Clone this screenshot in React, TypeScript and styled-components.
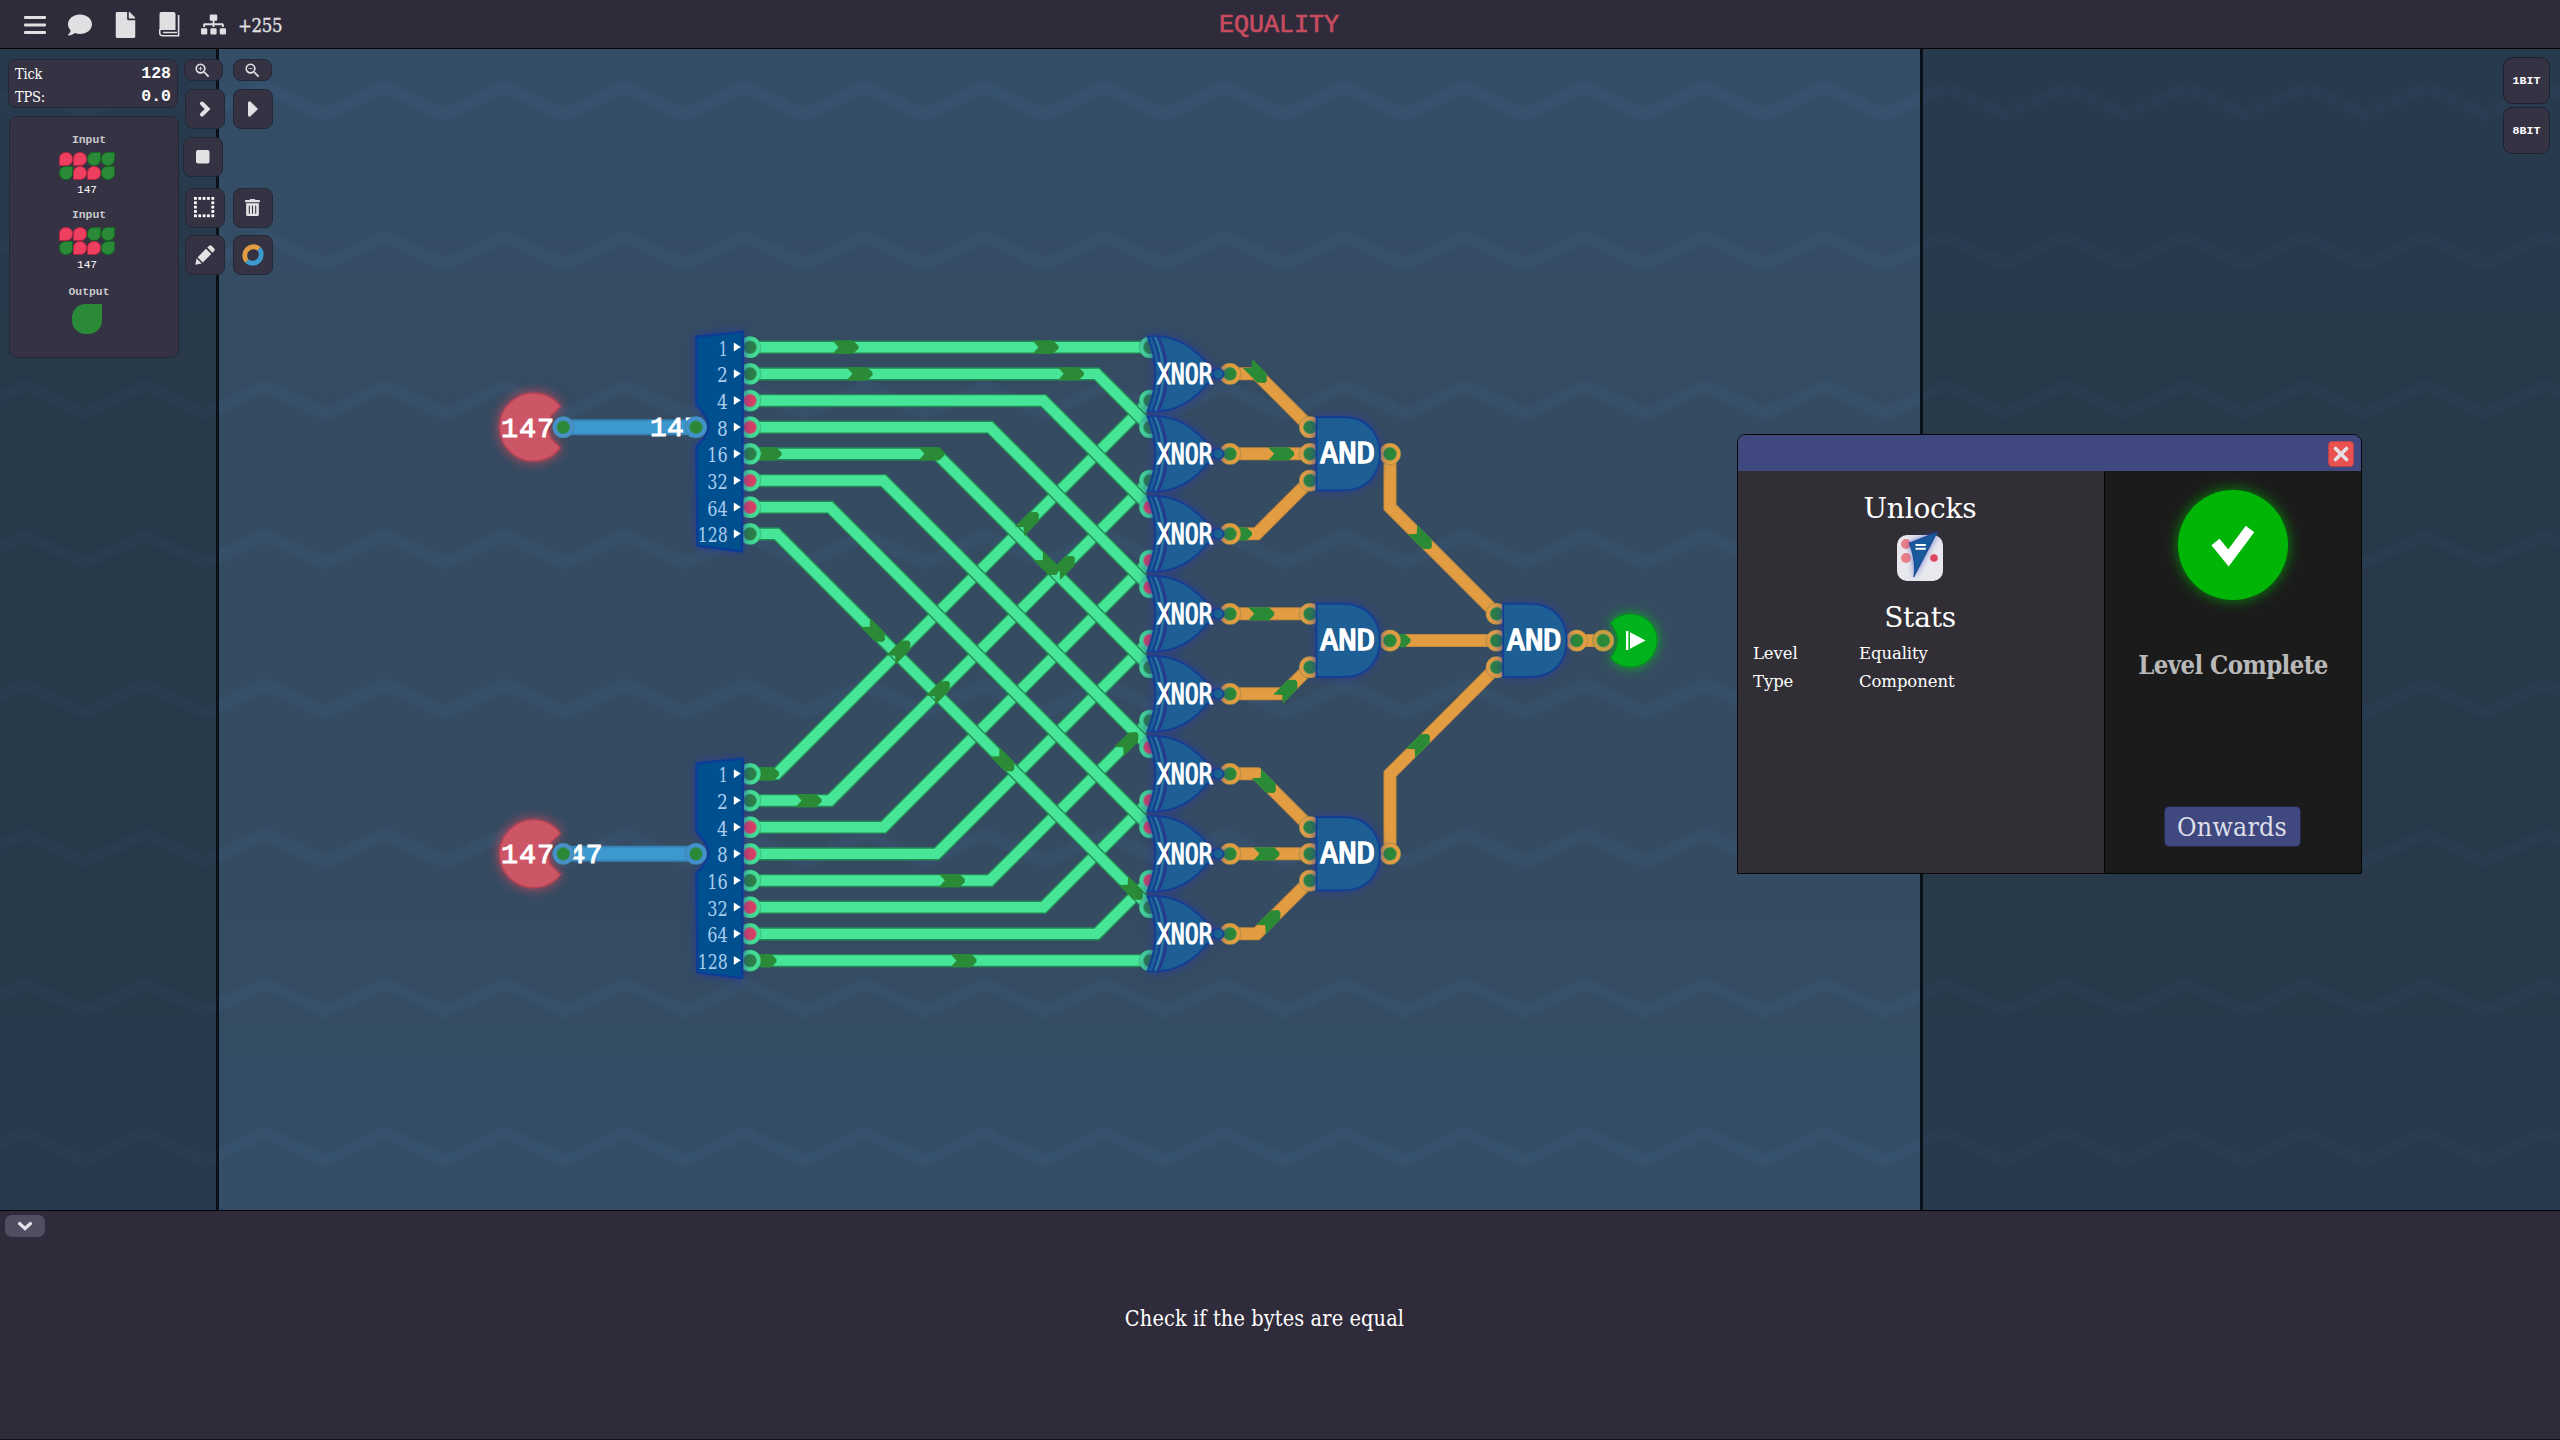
import React from 'react';
import styled, { createGlobalStyle } from 'styled-components';
import { FaComment, FaFile, FaSitemap, FaTrashAlt } from 'react-icons/fa';
import { MdZoomIn, MdZoomOut } from 'react-icons/md';

const SLAB = "'DejaVu Serif Condensed', 'DejaVu Serif', serif";
const SLAB_WIDE = "'DejaVu Serif', serif";
const MONO = "'Liberation Mono', 'DejaVu Sans Mono', monospace";

const GlobalStyle = createGlobalStyle`
  * { box-sizing: border-box; }
  body { margin: 0; background: #2f2b3b; overflow: hidden; }
`;

const Screen = styled.div`
  width: 2560px;
  height: 1440px;
  display: flex;
  flex-direction: column;
  font-family: ${SLAB};
  font-stretch: condensed;
  color: #fff;
`;

const Header = styled.header`
  height: 49px;
  flex: none;
  display: grid;
  grid-template-columns: 1fr auto 1fr;
  align-items: center;
  background: #2f2b3b;
  border-bottom: 1px solid #050507;
`;

const HeaderTools = styled.nav`
  display: flex;
  align-items: center;
  height: 48px;
  padding-left: 24px;
  color: #e0e0e2;
`;

const Tool = styled.span<{ $gap: number }>`
  display: flex;
  padding-top: 1px;
  margin-right: ${p => p.$gap}px;
`;

const FileGlyph = styled(FaFile)`
  width: 23px;
  height: 26px;
`;

const Score = styled.span`
  font-size: 18.5px;
  letter-spacing: -0.35px;
  line-height: 24px;
  padding-top: 4px;
  -webkit-text-stroke: 0.3px currentColor;
`;

const Title = styled.h1`
  margin: 3px 2px 0 0;
  font: 400 25px/30px ${MONO};
  color: #c84c60;
  -webkit-text-stroke: 0.7px currentColor;
`;

const Board = styled.main`
  position: relative;
  height: 1161px;
  flex: none;
  overflow: hidden;
  display: flex;
  justify-content: space-between;
`;

const Canvas = styled.svg`
  position: absolute;
  left: 0;
  top: 0;
`;

const Glow = styled.g<{ $color: string; $size: number }>`
  filter: drop-shadow(0 0 ${p => p.$size}px ${p => p.$color});
`;

const Sidebar = styled.aside`
  position: relative;
  display: flex;
  gap: 5px;
  padding: 10px 0 0 8px;
  align-items: flex-start;
`;

const Panels = styled.div`
  display: flex;
  flex-direction: column;
  width: 172px;
  gap: 8px;
`;

const Panel = styled.section`
  background: #353243;
  border: 1px solid #222936;
  border-radius: 8px;
`;

const TickPanel = styled(Panel)`
  width: 170px;
  height: 49px;
  padding: 2px 6px 0 6px;
`;

const TickRow = styled.div`
  display: flex;
  justify-content: space-between;
  height: 23px;
  align-items: center;
  font-size: 14.5px;
  letter-spacing: -0.2px;
`;

const TickValue = styled.span`
  font: 700 16.5px/20px ${MONO};
  letter-spacing: 0;
`;

const PinPanel = styled(Panel)`
  width: 170px;
  height: 242px;
  margin-left: 1px;
  padding: 16px 14px 0 0;
  display: flex;
  flex-direction: column;
  align-items: center;
`;

const PinGroup = styled.div<{ $height: number }>`
  height: ${p => p.$height}px;
  display: flex;
  flex-direction: column;
  align-items: center;
`;

const PinLabel = styled.div`
  font: 700 11.4px/15px ${MONO};
  color: #c9c9cd;
  margin: 0 0 4px 4px;
`;

const PinValue = styled.div`
  font: 400 11.2px/14px ${MONO};
  color: #fff;
  margin-top: 3px;
`;

const Bits = styled.div`
  display: grid;
  grid-template-columns: repeat(4, 14.2px);
  grid-auto-rows: 14.2px;
`;

const Bit = styled.i<{ $on: boolean; $size?: number }>`
  width: ${p => p.$size ?? 14.2}px;
  height: ${p => p.$size ?? 14.2}px;
  background: ${p => (p.$on ? '#2b8a38' : '#ee3f60')};
  border: ${p => (p.$size ? 0 : 1.5)}px solid ${p => (p.$on ? '#12691f' : '#b32440')};
  border-radius: ${p => (p.$on ? '45% 1px 45% 45%' : '45% 45% 45% 1px')};
`;

const ToolColumns = styled.div`
  display: grid;
  grid-template-columns: 40px 40px;
  grid-template-rows: 21.5px 40px 40px 40px 40px;
  column-gap: 8px;
  row-gap: 8px;
`;

const ToolButton = styled.button<{ $dx?: number; $dy?: number; $w?: number; $h?: number }>`
  width: ${p => p.$w ?? 40}px;
  height: ${p => p.$h ?? 40}px;
  margin: ${p => p.$dy ?? 0}px 0 0 ${p => p.$dx ?? 0}px;
  padding: 0 1px 0 0;
  display: flex;
  align-items: center;
  justify-content: center;
  background: #353243;
  border: 1px solid #222936;
  border-radius: 8px;
  color: #e2e2e4;
`;

const Spacer = styled.span``;

const Palette = styled.aside`
  position: relative;
  display: flex;
  flex-direction: column;
  gap: 3px;
  padding: 8px 10px 0 0;
`;

const PaletteButton = styled.button`
  width: 47px;
  height: 47px;
  padding: 0;
  background: #353243;
  border: 1px solid #1d2230;
  border-radius: 9px;
  color: #fff;
  font: 700 11.6px/14px ${MONO};
`;

const Dialog = styled.section`
  position: absolute;
  left: 1737px;
  top: 385px;
  width: 625px;
  height: 440px;
  display: flex;
  flex-direction: column;
  border: 1px solid #07070a;
  border-radius: 9px 9px 0 0;
  overflow: hidden;
`;

const DialogBar = styled.header`
  height: 36px;
  flex: none;
  display: flex;
  justify-content: flex-end;
  align-items: center;
  padding: 2px 7px 0 0;
  background: #404880;
`;

const CloseButton = styled.button`
  width: 26px;
  height: 26px;
  padding: 0;
  display: flex;
  align-items: center;
  justify-content: center;
  background: #e9524f;
  border: 1px solid #b8434f;
  border-radius: 4px;
`;

const DialogBody = styled.div`
  flex: 1;
  display: grid;
  grid-template-columns: 366px 1fr;
`;

const StatsPane = styled.div`
  background: #312f35;
  display: flex;
  flex-direction: column;
  align-items: center;
  padding-top: 18px;
`;

const Heading = styled.h2`
  margin: 0;
  padding-right: 2px;
  font-weight: 400;
  font-family: ${SLAB_WIDE};
  font-stretch: normal;
  font-size: 28px;
  line-height: 40px;
  letter-spacing: -0.2px;
`;

const StatTable = styled.dl`
  align-self: stretch;
  margin: 1px 0 0;
  padding-left: 15px;
  display: grid;
  grid-template-columns: 106px 1fr;
  grid-auto-rows: 28.5px;
  align-items: center;
  font-family: ${SLAB_WIDE};
  font-stretch: normal;
  font-size: 16.5px;
`;

const Stat = styled.span`
  letter-spacing: -0.1px;
`;

const UnlockList = styled.div`
  display: flex;
  height: 69px;
  padding: 2px 3px 0 0;
`;

const ResultPane = styled.div`
  background: #1b1b1b;
  border-left: 1px solid #050505;
  display: flex;
  flex-direction: column;
  align-items: center;
  padding-top: 19px;
`;

const Badge = styled.div`
  width: 110px;
  height: 110px;
  border-radius: 50%;
  background: #00b506;
  box-shadow: 0 0 14px rgba(0, 181, 6, 0.75);
`;

const ResultText = styled.p`
  margin: 46px 0 0;
  font-weight: 700;
  font-size: 25.5px;
  letter-spacing: -0.6px;
  line-height: 38px;
  color: #b9b9b9;
  white-space: nowrap;
`;

const Onwards = styled.button`
  margin: 122px 2px 0 0;
  width: 137px;
  height: 41px;
  padding: 0;
  font-family: ${SLAB};
  font-stretch: condensed;
  font-size: 26.5px;
  line-height: 38px;
  letter-spacing: 0.2px;
  color: #dedfe8;
  background: #404880;
  border: 1px solid #23284a;
  border-radius: 5px;
`;

const Footer = styled.footer`
  flex: 1;
  display: flex;
  flex-direction: column;
  background: #2f2b3b;
  border-top: 1px solid #050507;
  border-bottom: 1px solid #111018;
`;

const Collapse = styled.button`
  width: 40px;
  height: 22px;
  margin: 4px 0 0 5px;
  padding: 0;
  display: flex;
  align-items: center;
  justify-content: center;
  background: #514e61;
  border: 0;
  border-radius: 7px;
`;

const Hint = styled.p`
  margin: 66px 0 0;
  padding-right: 31px;
  text-align: center;
  font-size: 21.5px;
  letter-spacing: 0.13px;
  line-height: 32px;
`;

/* ---------- circuit geometry ---------- */

const G = 26.667;
const rowY = (n: number) => 347.2 + G * n;
const BITS = [1, 2, 4, 8, 16, 32, 64, 128];
const VALUE = 147;
const isOn = (i: number) => (VALUE & (1 << i)) !== 0;

type Pt = [number, number];

const topWires: Pt[][] = BITS.map((_, i) => {
  const y = rowY(i);
  const end = rowY(0) + 80 * i;
  return [[750, y], [1150 - (end - y), y], [1150, end]];
});
const bottomWires: Pt[][] = BITS.map((_, i) => {
  const y = rowY(16 + i);
  const end = rowY(2) + 80 * i;
  return [[750, y], [1150 - (y - end), y], [1150, end]];
});
const xnorY = (k: number) => rowY(1) + 80 * k;

const orangeWires: Pt[][] = [
  [[1230, xnorY(0)], [1256.7, xnorY(0)], [1310, rowY(3)]],
  [[1230, xnorY(1)], [1310, rowY(4)]],
  [[1230, xnorY(2)], [1256.7, xnorY(2)], [1310, rowY(5)]],
  [[1230, xnorY(3)], [1310, rowY(10)]],
  [[1230, xnorY(4)], [1283.3, xnorY(4)], [1310, rowY(12)]],
  [[1230, xnorY(5)], [1256.7, xnorY(5)], [1310, rowY(18)]],
  [[1230, xnorY(6)], [1310, rowY(19)]],
  [[1230, xnorY(7)], [1256.7, xnorY(7)], [1310, rowY(20)]],
  [[1390, rowY(4)], [1390, rowY(6)], [1496.7, rowY(10)]],
  [[1390, rowY(11)], [1496.7, rowY(11)]],
  [[1390, rowY(19)], [1390, rowY(16)], [1496.7, rowY(12)]],
  [[1576.7, rowY(11)], [1603.3, rowY(11)]],
];

const arrows: [number, number, number][] = [
  [846, rowY(0), 0], [1046, rowY(0), 0],
  [860, rowY(1), 0], [1071.3, rowY(1), 0],
  [769, rowY(4), 0], [932, rowY(4), 0],
  [1029, 521.9, -45], [1048, 565.2, 45], [1065, 565.9, -45],
  [875, 632, 45], [900.5, 650.4, -45], [940, 690.9, -45],
  [766.5, rowY(16), 0], [809, rowY(17), 0],
  [1004.5, 761.5, 45], [1128.5, 742, -45], [952.3, rowY(20), 0],
  [1133, 890, 45], [764, rowY(23), 0], [964, rowY(23), 0],
  [1257, 373, 45], [1281.6, xnorY(1), 0], [1239.5, xnorY(2), 0],
  [1261.7, xnorY(3), 0], [1398, rowY(11), 0], [1422, 539.2, 45],
  [1287.5, 689.7, -45], [1420, 743.9, -45], [1266, 783.1, 45],
  [1266.9, xnorY(6), 0], [1270.5, 920, -45],
];

const toPoints = (pts: Pt[]) => pts.map(p => p.join(',')).join(' ');

const Wire = ({ pts, edge, color, width = 13.2, inner = 10.4 }: {
  pts: Pt[]; edge: string; color: string; width?: number; inner?: number;
}) => (
  <g fill="none" strokeLinejoin="miter">
    <polyline points={toPoints(pts)} stroke={edge} strokeWidth={width} />
    <polyline points={toPoints(pts)} stroke={color} strokeWidth={inner} />
  </g>
);

const Pin = ({ x, y, ring, on = true, dim = false }: {
  x: number; y: number; ring: string; on?: boolean; dim?: boolean;
}) => (
  <g>
    <circle cx={x} cy={y} r={10.9} fill={ring} stroke="rgba(40,110,80,.35)" strokeWidth={0.8} />
    <circle cx={x} cy={y} r={6.3} fill={on ? (dim ? '#2c7f45' : '#2b8837') : '#da4064'}
      stroke={on ? '#2f8f5a' : '#b36b75'} strokeOpacity={0.6} strokeWidth={1.2} />
  </g>
);

const Zigzags = () => {
  const rows = [];
  for (let r = 0; r < 8; r++) {
    const pts: string[] = [];
    const top = 87 + 149.4 * r;
    for (let i = -1; i < 44; i++) pts.push(`${25 + 60 * i},${i % 2 === 0 ? top : top + 28}`);
    rows.push(<polyline key={r} points={pts.join(' ')} />);
  }
  return <g fill="none" stroke="#38587a" strokeOpacity={0.36} strokeWidth={12} filter="url(#soft)">{rows}</g>;
};

const Splitter = ({ y }: { y: number }) => (
  <g transform={`translate(0 ${y})`}>
    <Glow $color="rgba(38,56,165,.8)" $size={5}>
      <path d="M696.5 -90.5 L743 -95.3 L742 124.3 L697.5 118.5 L696.5 19.5 Q708.5 8 708.5 0 Q708.5 -10 696.5 -22.5 Z"
        fill="#00508f" stroke="#0b3d96" strokeWidth={2.4} strokeLinejoin="round" />
    </Glow>
    {BITS.map((b, i) => {
      const ry = -80 + G * i;
      return (
        <g key={b}>
          <text x={727.8} y={ry + 8.4} textAnchor="end" fontFamily={SLAB} fontSize={19.5}
            textLength={b === 1 ? 9 : b > 99 ? 30 : b > 9 ? 20.5 : 10.8} lengthAdjust="spacingAndGlyphs" fill="#a9cdef">{b}</text>
          <path d={`M733.8 ${ry - 4.6} L740.8 ${ry - 0.3} L733.8 ${ry + 4.4} Z`} fill="#fff" />
        </g>
      );
    })}
  </g>
);

const InputNode = ({ y }: { y: number }) => (
  <g transform={`translate(0 ${y})`}>
    <Glow $color="rgba(225,70,90,.85)" $size={6}>
      <path d="M560.5 -20.8 A34 34 0 1 0 560.5 20.6 L551 11.5 Q545.5 0 551 -11.5 Z" fill="#cd5666" stroke="#b54455" strokeWidth={1.4} />
    </Glow>
    <text x={501} y={9.4} fontFamily={MONO} fontSize={28.5} textLength={53} fill="#fff" stroke="#fff" strokeWidth={1}>147</text>
  </g>
);

const Xnor = ({ y }: { y: number }) => (
  <g transform={`translate(1150 ${y})`}>
    <Glow $color="rgba(40,58,165,.85)" $size={5}>
      <path d="M-2.5 -37.5 L9 -37.5 C34 -36 53 -18 65 0 C53 18 34 36 9 37.5 L-2.5 37.5 Q13.5 0 -2.5 -37.5 Z"
        fill="#1d5e94" stroke="#123f93" strokeWidth={1.8} strokeLinejoin="round" />
      <circle cx={68.6} cy={0} r={5.3} fill="#1d5e94" stroke="#123f93" strokeWidth={1.3} />
    </Glow>
    <g fill="none">
      <path d="M2.5 -37 Q19 0 2.5 37" stroke="#143f93" strokeWidth={1.8} />
      <path d="M5 -37 Q21 0 5 37" stroke="#3a8fae" strokeWidth={1.2} strokeOpacity={0.8} />
      <path d="M8.5 -37 Q25 0 8.5 37" stroke="#26388c" strokeWidth={2.6} />
    </g>
    <text x={6.8} y={10.3} fontFamily="'DejaVu Sans Mono', monospace" fontSize={28.5}
      textLength={56} lengthAdjust="spacingAndGlyphs" fill="#fff" stroke="#fff" strokeWidth={1.1}>XNOR</text>
  </g>
);

const AndGate = ({ x, y }: { x: number; y: number }) => (
  <g transform={`translate(${x} ${y})`}>
    <Glow $color="rgba(40,58,165,.85)" $size={5}>
      <path d="M6.5 -36.6 H34 C58 -36.6 70 -19 70 0 C70 19 58 36.4 34 36.4 H6.5 Z"
        fill="#1d5e94" stroke="#123f93" strokeWidth={1.8} />
    </Glow>
    <text x={10} y={9.4} fontFamily="'DejaVu Sans Mono', monospace" fontSize={28}
      textLength={55} lengthAdjust="spacingAndGlyphs" fill="#fff" stroke="#fff" strokeWidth={1.4}>AND</text>
  </g>
);

const Circuit = () => {
  const green = { edge: '#238a55', color: '#47e598' };
  const orange = { edge: '#c58a3d', color: '#e29d42' };
  const blueText = { fontFamily: MONO, fontSize: 28, fill: '#fff', stroke: '#fff', strokeWidth: 1 };
  return (
    <g>
      {bottomWires.map((w, i) => <Wire key={i} pts={w} {...green} />)}
      {topWires.map((w, i) => <Wire key={i} pts={w} {...green} />)}
      {orangeWires.map((w, i) => <Wire key={i} pts={w} {...orange} width={13} inner={11} />)}
      {[3, 19].map(r => (
        <Wire key={r} pts={[[563.3, rowY(r)], [696, rowY(r)]]} edge="#3684b8" color="#3d98d0" width={16} inner={12} />
      ))}
      <text x={650} y={rowY(3) + 8.8} {...blueText} textLength={51}>147</text>
      <text x={568.6} y={rowY(19) + 8.8} {...blueText} textLength={34}>47</text>

      {arrows.map(([x, y, a], i) => (
        <path key={i} transform={`translate(${x} ${y}) rotate(${a})`} fill="#2a8a35"
          d="M-13.5 -6.6 H7 L12.5 -1.5 V1.5 L7 6.6 H-13.5 L-7.5 0 Z" />
      ))}

      {BITS.map((_, i) => (
        <g key={i}>
          <Pin x={750} y={rowY(i)} ring="#45dc96" on={isOn(i)} dim />
          <Pin x={750} y={rowY(16 + i)} ring="#45dc96" on={isOn(i)} dim />
          <Pin x={1150} y={rowY(0) + 80 * i} ring="#44d299" on={isOn(i)} dim />
          <Pin x={1150} y={rowY(2) + 80 * i} ring="#44d299" on={isOn(i)} dim />
          <Pin x={1230} y={xnorY(i)} ring="#e29d42" />
        </g>
      ))}
      {[3, 4, 5, 10, 12, 18, 19, 20].map(r => <Pin key={r} x={1310} y={rowY(r)} ring="#de9b48" dim />)}
      {[4, 11, 19].map(r => <Pin key={r} x={1390} y={rowY(r)} ring="#e29d42" />)}
      {[10, 11, 12].map(r => <Pin key={r} x={1496.7} y={rowY(r)} ring="#de9b48" dim />)}
      <Pin x={1576.7} y={rowY(11)} ring="#e29d42" />

      <Splitter y={rowY(3)} />
      <Splitter y={rowY(19)} />
      <InputNode y={rowY(3)} />
      <InputNode y={rowY(19)} />
      {[3, 19].map(r => (
        <g key={r}>
          <Pin x={563.3} y={rowY(r)} ring="#4a90c8" />
          <Pin x={696} y={rowY(r)} ring="#4290cc" />
        </g>
      ))}
      {BITS.map((_, k) => <Xnor key={k} y={xnorY(k)} />)}
      <AndGate x={1310} y={rowY(4)} />
      <AndGate x={1310} y={rowY(11)} />
      <AndGate x={1310} y={rowY(19)} />
      <AndGate x={1496.7} y={rowY(11)} />

      <g transform={`translate(1631 ${rowY(11)})`}>
        <Glow $color="rgba(0,200,25,.8)" $size={6}>
          <path d="M-20.5 -17.5 A26.6 26.6 0 1 1 -20.5 17.5 Q-13.6 9 -13.6 0 Q-13.6 -9 -20.5 -17.5 Z" fill="#00b31c" stroke="#078d1c" strokeWidth={1} />
        </Glow>
        <path d="M-5 -9.5 h2.4 v19 h-2.4 Z M-1 -8.2 L14.6 0 L-1 8.2 Z" fill="#fff" />
      </g>
      <Pin x={1603.3} y={rowY(11)} ring="#c99c41" />
    </g>
  );
};

const BookIcon = () => (
  <svg width="22" height="26" viewBox="0 0 22 26">
    <path d="M3.5 0 H16 Q18 0 18 2 V18 H3.8 Q2.6 18 2 19 V2 Q2 0 3.5 0 Z" fill="#e0e0e2" transform="translate(-1.5 0)" />
    <path d="M19.6 3 V23.8 H3.5 Q0.7 23.6 0.7 21 V17 M18 20.5 H4" fill="none" stroke="#e0e0e2" strokeWidth="1.6" />
  </svg>
);

const MenuIcon = () => (
  <svg width="22" height="18" viewBox="0 0 22 18" fill="#e0e0e2">
    <rect width="22" height="3" rx="1" /><rect y="7.5" width="22" height="3" rx="1" /><rect y="15" width="22" height="3" rx="1" />
  </svg>
);

const SelectIcon = () => {
  const dots = [];
  for (let r = 0; r < 5; r++) for (let c = 0; c < 5; c++)
    if (r === 0 || r === 4 || c === 0 || c === 4) dots.push(<rect key={`${r}${c}`} x={c * 4.35} y={r * 4.35} width="2.8" height="2.8" />);
  return <svg width="20.3" height="20.3" viewBox="0 0 20.3 20.3" fill="#fff">{dots}</svg>;
};

const PencilIcon = () => (
  <svg width="20" height="20" viewBox="0 0 20 20" fill="#e2e2e4">
    <path d="M0.3 19.7 L1.6 13.4 L6.6 18.4 Z" />
    <path d="M2.6 12.2 L11 3.8 L16.2 9 L7.8 17.4 Z" />
    <path d="M12.3 2.5 L14.2 0.7 Q15.5 -0.2 16.7 0.9 L19.1 3.3 Q20.3 4.6 19.2 5.9 L17.5 7.7 Z" />
  </svg>
);

const RingIcon = () => (
  <svg width="24" height="24" viewBox="-12 -12 24 24" fill="none" strokeWidth="4.8">
    <path d="M-6.2 6.2 A8.8 8.8 0 0 1 6.2 -6.2" stroke="#e29d42" />
    <path d="M6.2 -6.2 A8.8 8.8 0 0 1 -6.2 6.2" stroke="#3d98d0" />
  </svg>
);

const UnlockIcon = () => (
  <svg width="54" height="54" viewBox="-4 -4 54 54">
    <rect width="46" height="46" rx="10" fill="#e8e8ee" />
    <circle cx="9" cy="9" r="4.9" fill="#ea7f86" />
    <circle cx="9" cy="23" r="4.9" fill="#ea7f86" />
    <circle cx="37" cy="23" r="3.8" fill="#e34462" />
    <Glow $color="rgba(50,70,190,.7)" $size={3}>
      <path d="M12.4 8 L40.3 -3 L16.8 42 Q19.5 28 12.4 8 Z" fill="#17599a" stroke="#173f94" strokeWidth="0.8" />
    </Glow>
    <path d="M18.5 9 h10.3 v2 h-10.3 Z M18.5 12.8 h10.3 v2 h-10.3 Z" fill="#fff" />
  </svg>
);

const InputGroup = ({ height }: { height: number }) => (
  <PinGroup $height={height}>
    <PinLabel>Input</PinLabel>
    <Bits>
      {[false, false, true, true, true, false, false, true].map((on, i) => <Bit key={i} $on={on} />)}
    </Bits>
    <PinValue>147</PinValue>
  </PinGroup>
);

export default function App() {
  return (
    <Screen>
      <GlobalStyle />
      <Header>
        <HeaderTools>
          <Tool $gap={22}><MenuIcon /></Tool>
          <Tool $gap={22}><FaComment size={24} /></Tool>
          <Tool $gap={22}><FileGlyph /></Tool>
          <Tool $gap={20}><BookIcon /></Tool>
          <Tool $gap={12}><FaSitemap size={25} /></Tool>
          <Score>+255</Score>
        </HeaderTools>
        <Title>EQUALITY</Title>
      </Header>

      <Board>
        <Canvas width="2560" height="1161" viewBox="0 49 2560 1161">
          <defs>
            <linearGradient id="sea" x1="0" y1="0" x2="0" y2="1">
              <stop offset="0" stopColor="#344e68" />
              <stop offset="0.3" stopColor="#354b61" />
              <stop offset="0.75" stopColor="#354b61" />
              <stop offset="1" stopColor="#334e66" />
            </linearGradient>
            <filter id="soft" x="-2%" y="-40%" width="104%" height="180%"><feGaussianBlur stdDeviation="1.6" /></filter>
          </defs>
          <rect x="0" y="49" width="2560" height="1161" fill="url(#sea)" />
          <Zigzags />
          <rect x="0" y="49" width="216" height="1161" fill="rgba(20,26,34,.36)" />
          <rect x="1923" y="49" width="637" height="1161" fill="rgba(20,26,34,.36)" />
          <rect x="216" y="49" width="3" height="1161" fill="#091018" />
          <rect x="1920" y="49" width="3" height="1161" fill="#091018" />
          <Circuit />
        </Canvas>

        <Sidebar>
          <Panels>
            <TickPanel>
              <TickRow>Tick<TickValue>128</TickValue></TickRow>
              <TickRow>TPS:<TickValue>0.0</TickValue></TickRow>
            </TickPanel>
            <PinPanel>
              <InputGroup height={75} />
              <InputGroup height={77} />
              <PinGroup $height={60}>
                <PinLabel>Output</PinLabel>
                <Bit $on $size={30} />
              </PinGroup>
            </PinPanel>
          </Panels>

          <ToolColumns>
            <ToolButton $h={22} $w={38.5} $dx={-1}><MdZoomIn size={19} /></ToolButton>
            <ToolButton $h={22} $w={39}><MdZoomOut size={19} /></ToolButton>
            <ToolButton>
              <svg width="12" height="18" viewBox="0 0 12 18"><path d="M3 3.5 L8.6 9 L3 14.5" fill="none" stroke="#e2e2e4" strokeWidth="4" strokeLinecap="round" /></svg>
            </ToolButton>
            <ToolButton>
              <svg width="12" height="18" viewBox="0 0 12 18"><path d="M1.5 2.5 Q1.5 1.5 2.6 1.8 L3.6 2.3 L10.5 9 L3.6 15.7 L2.6 16.2 Q1.5 16.5 1.5 15.5 Z" fill="#e2e2e4" stroke="#e2e2e4" strokeLinejoin="round" /></svg>
            </ToolButton>
            <ToolButton $dx={-2}>
              <svg width="16" height="14" viewBox="0 0 16 14"><rect x="1" width="13.5" height="13.5" rx="2" fill="#e2e2e4" /></svg>
            </ToolButton>
            <Spacer />
            <ToolButton $dy={3}><SelectIcon /></ToolButton>
            <ToolButton $dy={3}><FaTrashAlt size={17} /></ToolButton>
            <ToolButton $dy={2}><PencilIcon /></ToolButton>
            <ToolButton $dy={2}><RingIcon /></ToolButton>
          </ToolColumns>
        </Sidebar>

        <Palette>
          <PaletteButton>1BIT</PaletteButton>
          <PaletteButton>8BIT</PaletteButton>
        </Palette>

        <Dialog>
          <DialogBar>
            <CloseButton>
              <svg width="16" height="16" viewBox="0 0 16 16"><path d="M2.5 2.5 L13.5 13.5 M13.5 2.5 L2.5 13.5" stroke="#e6e0e6" strokeWidth="3.6" strokeLinecap="round" /></svg>
            </CloseButton>
          </DialogBar>
          <DialogBody>
            <StatsPane>
              <Heading>Unlocks</Heading>
              <UnlockList><UnlockIcon /></UnlockList>
              <Heading>Stats</Heading>
              <StatTable>
                <Stat>Level</Stat><Stat>Equality</Stat>
                <Stat>Type</Stat><Stat>Component</Stat>
              </StatTable>
            </StatsPane>
            <ResultPane>
              <Badge>
                <svg width="110" height="110" viewBox="0 0 110 110">
                  <path d="M37.5 52 L50.5 68 L72 39" fill="none" stroke="#fff" strokeWidth="10.5" />
                </svg>
              </Badge>
              <ResultText>Level Complete</ResultText>
              <Onwards>Onwards</Onwards>
            </ResultPane>
          </DialogBody>
        </Dialog>
      </Board>

      <Footer>
        <Collapse>
          <svg width="16" height="10" viewBox="0 0 16 10"><path d="M2.5 2.5 L8 7.5 L13.5 2.5" fill="none" stroke="#e2e2ea" strokeWidth="3.2" strokeLinecap="round" /></svg>
        </Collapse>
        <Hint>Check if the bytes are equal</Hint>
      </Footer>
    </Screen>
  );
}
